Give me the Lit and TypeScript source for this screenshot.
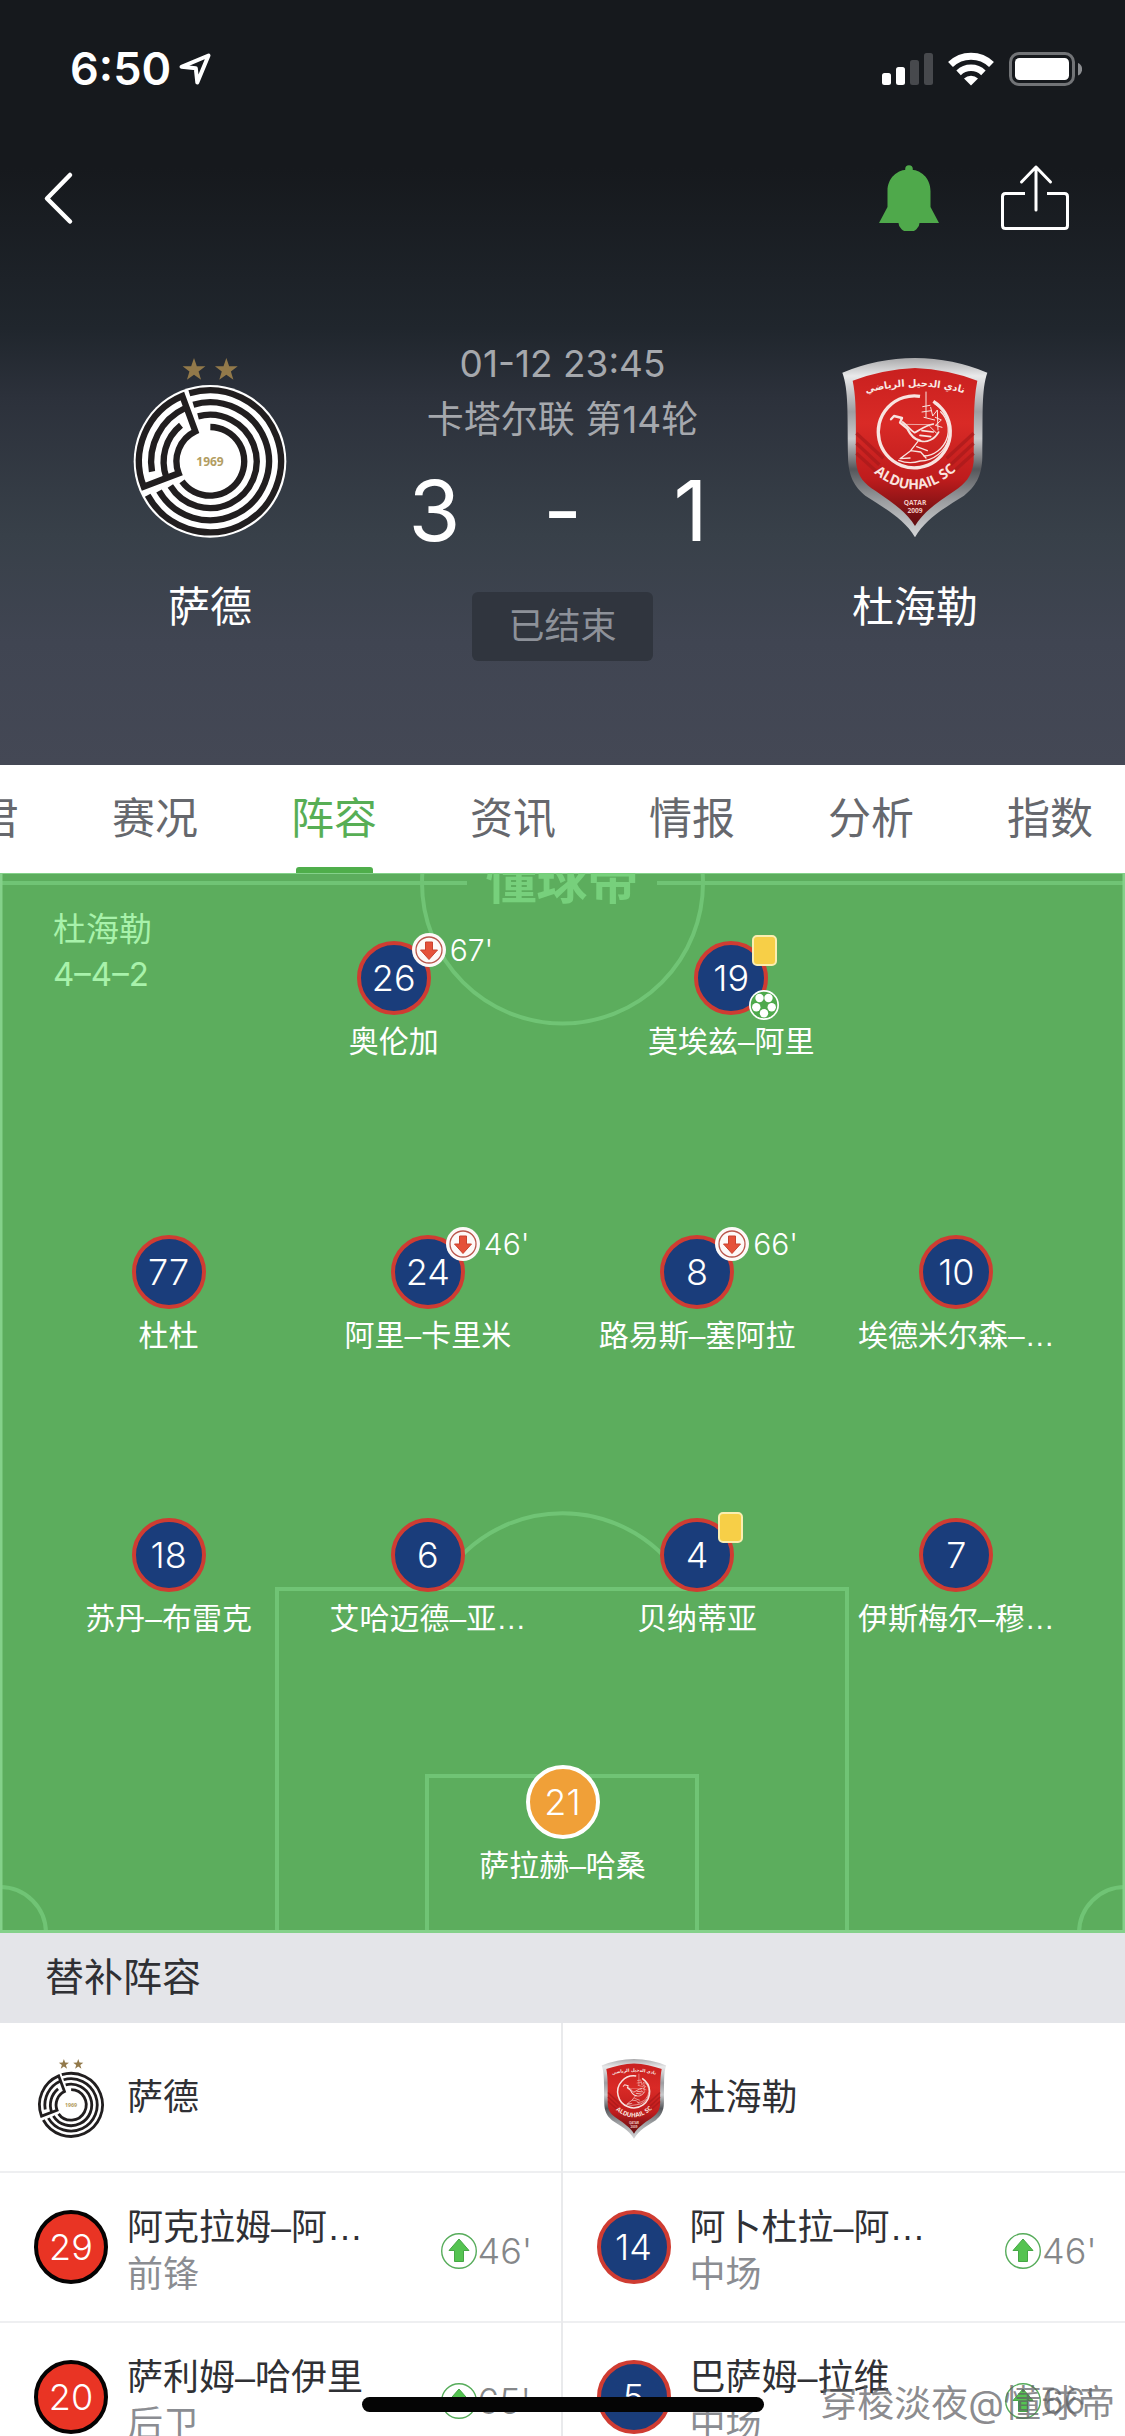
import { LitElement, html, svg, css, nothing } from "lit";
import { customElement, property, state } from "lit/decorators.js";
import { classMap } from "lit/directives/class-map.js";

type Kit = "navy" | "keeper" | "red";

interface Player {
  no: number;
  name: string;
  kit?: Kit;
  off?: string;
  card?: boolean;
  goal?: boolean;
}

interface Substitute {
  no: number;
  name: string;
  role: string;
  on: string;
}

const LINES: Player[][] = [
  [
    { no: 26, name: "奥伦加", off: "67'" },
    { no: 19, name: "莫埃兹–阿里", card: true, goal: true },
  ],
  [
    { no: 77, name: "杜杜" },
    { no: 24, name: "阿里–卡里米", off: "46'" },
    { no: 8, name: "路易斯–塞阿拉", off: "66'" },
    { no: 10, name: "埃德米尔森–…" },
  ],
  [
    { no: 18, name: "苏丹–布雷克" },
    { no: 6, name: "艾哈迈德–亚…" },
    { no: 4, name: "贝纳蒂亚", card: true },
    { no: 7, name: "伊斯梅尔–穆…" },
  ],
  [{ no: 21, name: "萨拉赫–哈桑", kit: "keeper" }],
];

const BENCH: { team: "sadd" | "duhail"; label: string; kit: Kit; players: Substitute[] }[] = [
  {
    team: "sadd",
    label: "萨德",
    kit: "red",
    players: [
      { no: 29, name: "阿克拉姆–阿…", role: "前锋", on: "46'" },
      { no: 20, name: "萨利姆–哈伊里", role: "后卫", on: "65'" },
    ],
  },
  {
    team: "duhail",
    label: "杜海勒",
    kit: "navy",
    players: [
      { no: 14, name: "阿卜杜拉–阿…", role: "中场", on: "46'" },
      { no: 5, name: "巴萨姆–拉维", role: "中场", on: "66'" },
    ],
  },
];

const TABS = ["君", "赛况", "阵容", "资讯", "情报", "分析", "指数"];

const star = (cx: number, cy: number, r: number) => {
  const pts: string[] = [];
  for (let i = 0; i < 10; i++) {
    const a = (Math.PI / 5) * i - Math.PI / 2;
    const d = i % 2 ? r * 0.4 : r;
    pts.push(`${(cx + d * Math.cos(a)).toFixed(1)},${(cy + d * Math.sin(a)).toFixed(1)}`);
  }
  return svg`<polygon points=${pts.join(" ")} fill="#92794a" />`;
};

@customElement("team-crest")
export class TeamCrest extends LitElement {
  @property() team: "sadd" | "duhail" = "sadd";

  static styles = css`
    :host {
      display: block;
      aspect-ratio: 1;
    }
    svg {
      display: block;
      width: 100%;
      height: 100%;
    }
    .latin {
      font-family: "Open Sans", "Liberation Sans", sans-serif;
      font-weight: 700;
    }
    .arabic {
      font-family: "DejaVu Sans", sans-serif;
      font-weight: 700;
    }
  `;

  private sadd() {
    return html`<svg viewBox="62 84 540 540" role="img" aria-label="萨德">
      ${star(284, 120, 36)} ${star(381, 120, 36)}
      <circle cx="332" cy="394" r="229" fill="#fff" />
      <g transform="translate(332 394)" fill="none" stroke="#211e1f" stroke-width="19">
        <path d="M-62 -204A213 213 0 1 1 -187 102" />
        <path d="M-50 -170A177 177 0 1 1 -153 89" />
        <path d="M-36 -135A140 140 0 1 1 -119 74" />
        <path d="M1 -103A103 103 0 1 1 -84 60" />
        <path d="M-83 -196L-44 -90A100 100 0 0 0 -94 36L-199 76A213 213 0 0 1 -83 -196Z" />
        <path d="M-174 31A177 177 0 0 1 -74 -160" />
        <path d="M-131 48A140 140 0 0 1 -87 -108" />
      </g>
      <text class="latin" x="332" y="408" text-anchor="middle" font-size="36" fill="#b29d62">1969</text>
    </svg>`;
  }

  private duhail() {
    return html`<svg viewBox="15 84 540 540" role="img" aria-label="杜海勒">
      <defs>
        <linearGradient id="steel" x1="0" y1="0" x2="0" y2="1">
          <stop offset="0" stop-color="#a9a9ab" />
          <stop offset=".1" stop-color="#e9e9ea" />
          <stop offset=".3" stop-color="#9d9ea2" />
          <stop offset=".45" stop-color="#c9cacc" />
          <stop offset=".62" stop-color="#55575b" />
          <stop offset=".8" stop-color="#9c9ea1" />
          <stop offset="1" stop-color="#d5d6d8" />
        </linearGradient>
        <linearGradient id="cloth" x1="0" y1="0" x2="0" y2="1">
          <stop offset="0" stop-color="#c9201f" />
          <stop offset=".35" stop-color="#d92a26" />
          <stop offset=".7" stop-color="#bf1c1d" />
          <stop offset="1" stop-color="#5f0d10" />
        </linearGradient>
        <path id="top-arc" d="M116 196Q285 142 454 196" />
        <path id="low-arc" d="M140 408Q285 552 430 400" />
      </defs>
      <path
        fill="url(#steel)"
        d="M67 128Q170 85 285 84Q400 85 502 128C484 180 489 250 487 380C486 440 465 470 432 497C375 533 318 565 285 622C252 565 190 533 136 497C104 470 85 440 84 380C82 250 86 180 67 128Z"
      />
      <path
        fill="url(#cloth)"
        d="M98 152Q190 118 285 114Q382 118 472 152C458 220 463 300 461 395C456 440 434 462 404 482C350 518 308 548 285 588C262 548 218 518 166 482C134 462 112 440 108 395C106 300 112 220 98 152Z"
      />
      <g fill="none" stroke="#a81a1b" stroke-width="10" opacity=".7">
        <path d="M109 310L190 385M109 340L178 404M109 370L170 425" />
        <path d="M461 310L380 385M461 340L392 404M461 370L400 425" />
      </g>
      <g fill="none" stroke="#f8e4e0" stroke-linecap="round" stroke-linejoin="round">
        <path stroke-width="10" stroke-linecap="butt" d="M300 199A108 108 0 1 0 340 214" />
        <path stroke-width="4" d="M345 222A92 92 0 0 1 300 393A96 96 0 0 1 236 391" />
        <path stroke-width="4" d="M362 245A78 78 0 0 1 312 378" />
        <path stroke-width="7" d="M213 268L222 258L246 264L240 278L262 296C272 316 284 328 300 332" />
        <path stroke-width="5" d="M248 276C262 286 270 300 284 308C300 300 316 286 340 282" />
        <path stroke-width="5" d="M300 332C320 340 344 328 356 306M300 316L332 320M306 302L340 306" />
        <path stroke-width="4" d="M294 334L272 362L302 366L318 384M290 350L322 362M272 362L240 386L270 384" />
        <path stroke-width="3" d="M318 186V262M308 230L330 226M306 246L334 242M312 262L344 270M332 232L338 258L352 240L354 300M346 262L364 270L346 286L366 292M330 290L350 310" />
        <path stroke-width="2" d="M246 283L340 284" />
      </g>
      <text class="arabic" font-size="29" fill="#fae9e4" text-anchor="middle">
        <textPath href="#top-arc" startOffset="50%">نادي الدحيل الرياضي</textPath>
      </text>
      <text class="latin" font-size="42" fill="#fae3df" text-anchor="middle">
        <textPath href="#low-arc" startOffset="50%">ALDUHAIL SC</textPath>
      </text>
      <g class="latin" fill="#f0c9c5" text-anchor="middle" font-size="20">
        <text x="285" y="525">QATAR</text>
        <text x="285" y="549">2009</text>
      </g>
    </svg>`;
  }

  render() {
    return this.team === "sadd" ? this.sadd() : this.duhail();
  }
}

@customElement("shirt-disc")
export class ShirtDisc extends LitElement {
  @property() kit: Kit = "navy";
  @property({ type: Number }) no = 0;

  static styles = css`
    :host {
      display: block;
    }
    .disc {
      box-sizing: border-box;
      width: 74px;
      height: 74px;
      border: 4px solid #cf3c32;
      border-radius: 50%;
      background: #1a3d7b;
      color: #fff;
      display: flex;
      align-items: center;
      justify-content: center;
      font: 300 36px/40px Inter, "Liberation Sans", sans-serif;
    }
    .keeper {
      border-color: #fff;
      background: #f0a038;
    }
    .red {
      border-color: #050303;
      background: #e93424;
    }
  `;

  render() {
    return html`<div class=${classMap({ disc: true, [this.kit]: true })}>${this.no}</div>`;
  }
}

@customElement("pitch-player")
export class PitchPlayer extends LitElement {
  @property({ attribute: false }) player!: Player;

  static styles = css`
    :host {
      display: flex;
      flex-direction: column;
      align-items: center;
      color: #fff;
    }
    .figure {
      position: relative;
    }
    .off {
      position: absolute;
      left: 55px;
      top: -8px;
      display: flex;
      align-items: center;
      gap: 4px;
      font-weight: 300;
      font-size: 30px;
      line-height: 34px;
    }
    .off svg {
      width: 34px;
      height: 34px;
    }
    .card {
      position: absolute;
      left: 58px;
      top: -6px;
      width: 25px;
      height: 31px;
      box-sizing: border-box;
      border: 2px solid #fbeeb0;
      border-radius: 5px;
      background: #f7cf47;
    }
    .goal {
      position: absolute;
      left: 55px;
      top: 49px;
      width: 30px;
      height: 30px;
    }
    .name {
      margin-top: 8px;
      font-family: "Liberation Sans", "Noto Sans CJK SC", sans-serif;
      font-size: 30px;
      line-height: 38px;
      white-space: nowrap;
    }
  `;

  render() {
    const p = this.player;
    return html`
      <div class="figure">
        <shirt-disc .kit=${p.kit ?? "navy"} .no=${p.no}></shirt-disc>
        ${p.off
          ? html`<div class="off">
              <svg viewBox="0 0 34 34" aria-hidden="true">
                <circle cx="17" cy="17" r="17" fill="#fdf9f8" />
                <circle cx="17" cy="17" r="13" fill="none" stroke="#b9574c" stroke-width="1.3" />
                <path d="M13.5 9h7v8h5L17 26.5 8.500 17h5z" fill="#e5513a" stroke="#c9422f" />
              </svg>
              <span>${p.off}</span>
            </div>`
          : nothing}
        ${p.card ? html`<div class="card"></div>` : nothing}
        ${p.goal
          ? html`<svg class="goal" viewBox="0 0 30 30" aria-hidden="true">
              <circle cx="15" cy="15" r="15" fill="#fff" />
              <circle cx="15" cy="15" r="13.300" fill="#4ea94c" />
              <g fill="#fff">
                <circle cx="10.500" cy="8" r="4.200" />
                <circle cx="19.500" cy="8" r="4.200" />
                <circle cx="7.300" cy="17.300" r="4.200" />
                <circle cx="22.700" cy="17.300" r="4.200" />
                <circle cx="15" cy="23.300" r="4.200" />
              </g>
            </svg>`
          : nothing}
      </div>
      <div class="name">${p.name}</div>
    `;
  }
}

@customElement("app-root")
export class AppRoot extends LitElement {
  @state() private tab = "阵容";

  static styles = css`
    :host {
      display: block;
      font-family: Inter, "Noto Sans CJK SC", sans-serif;
      color: #2f3034;
    }
    * {
      box-sizing: border-box;
    }
    button {
      border: 0;
      padding: 0;
      background: none;
      font: inherit;
      color: inherit;
    }
    svg {
      display: block;
    }
    .screen {
      position: relative;
      height: 100vh;
      overflow: hidden;
      background: #fff;
    }

    .head {
      color: #fff;
      background: linear-gradient(#16191d 0, #16191d 22%, #20262d 43%, #2c313b 52%, #384049 70%, #404552 84%, #444855 100%);
    }
    .status {
      height: 132px;
      padding: 6px 43px 0 70px;
      display: flex;
      align-items: center;
    }
    .clock {
      font-size: 45px;
      font-weight: 600;
      line-height: 54px;
    }
    .locate {
      width: 34px;
      height: 34px;
      margin-left: 7px;
    }
    .signals {
      margin-left: auto;
      display: flex;
      align-items: center;
      gap: 15px;
    }
    .bars {
      width: 51px;
      height: 34px;
    }
    .wifi {
      width: 46px;
      height: 34px;
    }
    .battery {
      width: 73px;
      height: 34px;
    }
    .bar {
      height: 132px;
      padding: 0 54px 0 43px;
      display: flex;
      align-items: center;
    }
    .back svg {
      width: 32px;
      height: 56px;
    }
    .bell {
      margin-left: auto;
    }
    .bell svg {
      width: 60px;
      height: 66px;
    }
    .share {
      margin-left: 60px;
    }
    .share svg {
      width: 72px;
      height: 68px;
    }
    .match {
      display: grid;
      grid-template-columns: 180px 1fr 180px;
      padding: 72px 120px 104px;
    }
    .team {
      padding-top: 22px;
      text-align: center;
    }
    .team-name {
      margin-top: 39px;
      font-size: 42px;
      line-height: 60px;
      white-space: nowrap;
    }
    .mid {
      display: flex;
      flex-direction: column;
      align-items: center;
      color: #a5a8ad;
      font-size: 37px;
      line-height: 56px;
    }
    .score {
      width: 384px;
      margin-top: 13px;
      display: grid;
      grid-template-columns: repeat(3, 1fr);
      text-align: center;
      color: #fff;
      font-size: 84px;
      line-height: 100px;
    }
    .state {
      margin-top: 31px;
      padding: 0 36px;
      border-radius: 6px;
      background: #30353e;
      color: #8d9199;
      font-size: 36px;
      line-height: 69px;
    }

    .tabs {
      height: 108px;
      display: flex;
      gap: 93px;
      margin-left: -24px;
      font-size: 43px;
      color: #66686d;
    }
    .tab {
      flex: none;
      display: flex;
      flex-direction: column;
      align-items: center;
      line-height: 102px;
      padding-top: 2px;
    }
    .tab::after {
      content: "";
      width: 77px;
      height: 6px;
      margin-top: -2px;
      border-radius: 3px 3px 0 0;
    }
    .tab:first-child::after {
      display: none;
    }
    .chosen {
      color: #57ae55;
    }
    .chosen::after {
      background: #4fae4b;
    }

    .pitch {
      position: relative;
      height: 1060px;
      padding-top: 68px;
      background: #5cad5d;
      overflow: hidden;
    }
    .turf {
      position: absolute;
      inset: 0;
      width: 100%;
      height: 100%;
    }
    .turf-mark {
      font-family: "Noto Sans CJK SC", sans-serif;
      font-weight: 700;
    }
    .shape {
      position: absolute;
      left: 53px;
      top: 34px;
      color: #a8f2ab;
      font-size: 33px;
      line-height: 45px;
    }
    .lines {
      position: relative;
      display: grid;
      grid-template-rows: 294px 283px 247px auto;
    }
    .line {
      display: grid;
      align-items: start;
      justify-content: center;
    }
    .of-1 {
      grid-template-columns: 30%;
    }
    .of-2 {
      grid-template-columns: 30% 30%;
    }
    .of-4 {
      padding: 0 44px;
      grid-template-columns: 249fr 269fr 269fr 249fr;
    }

    .section {
      margin: 0;
      padding: 0 45px 2px;
      background: #e4e5e9;
      font-size: 39px;
      font-weight: 400;
      line-height: 88px;
    }
    .bench {
      display: grid;
      grid-template-columns: 1fr 1fr;
    }
    .side:first-child {
      border-right: 2px solid #e9eaec;
    }
    .row {
      height: 150px;
      padding-left: 34px;
      border-bottom: 2px solid #eeeff1;
      display: grid;
      grid-template-columns: 74px 1fr 120px;
      column-gap: 19px;
      align-items: center;
      font-family: "Liberation Sans", "Noto Sans CJK SC", sans-serif;
      font-size: 36px;
      line-height: 47px;
    }
    .row team-crest {
      width: 80px;
      margin-top: 3px;
      justify-self: center;
    }
    .info {
      padding-top: 7px;
      white-space: nowrap;
    }
    .role {
      color: #8b8d92;
    }
    .on {
      padding-top: 8px;
      display: flex;
      align-items: center;
      gap: 1px;
      color: #858789;
      font-family: Inter, sans-serif;
      font-weight: 300;
    }
    .on svg {
      width: 36px;
      height: 36px;
    }

    .credit {
      position: absolute;
      right: 10px;
      bottom: 8px;
      color: rgba(95, 96, 100, 0.72);
      font-size: 37px;
      line-height: 48px;
    }
    .home {
      position: absolute;
      left: 50%;
      bottom: 24px;
      width: 402px;
      height: 15px;
      margin-left: -201px;
      border-radius: 8px;
      background: #050505;
    }
  `;

  private renderStatus() {
    return html`<div class="status">
      <span class="clock">6:50</span>
      <svg class="locate" viewBox="0 0 34 34" aria-hidden="true">
        <path d="M3.500 14.800L30.500 3.500L19.300 30.500L17.800 16.200Z" fill="none" stroke="#fff" stroke-width="4" stroke-linejoin="round" />
      </svg>
      <div class="signals">
        <svg class="bars" viewBox="0 0 51 34" aria-hidden="true">
          <rect x="0" y="21" width="9" height="12" rx="2.500" fill="#fff" />
          <rect x="14" y="15" width="9" height="18" rx="2.500" fill="#fff" />
          <rect x="28" y="8" width="9" height="25" rx="2.500" fill="#47494d" />
          <rect x="42" y="1" width="9" height="32" rx="2.500" fill="#47494d" />
        </svg>
        <svg class="wifi" viewBox="0 0 46 34" aria-hidden="true">
          <g fill="none" stroke="#fff">
            <path d="M2.500 12.500A29.500 29.500 0 0 1 43.500 12.500" stroke-width="7" />
            <path d="M10.600 20.800A18 18 0 0 1 35.400 20.800" stroke-width="6.500" />
          </g>
          <path d="M16 26.500A10.500 10.500 0 0 1 30 26.500L23 33.500Z" fill="#fff" />
        </svg>
        <svg class="battery" viewBox="0 0 73 34" aria-hidden="true">
          <rect x="1.500" y="1.500" width="63" height="31" rx="8.500" fill="none" stroke="#727477" stroke-width="3" />
          <rect x="6" y="6" width="54" height="22" rx="4.500" fill="#fff" />
          <path d="M69 11C74.500 13 74.500 21 69 23.500Z" fill="#8b8d90" />
        </svg>
      </div>
    </div>`;
  }

  private renderBar() {
    return html`<div class="bar">
      <button class="back" aria-label="返回">
        <svg viewBox="0 0 32 56">
          <path d="M27 5L4 28.500L27 51.500" fill="none" stroke="#fff" stroke-width="4.500" stroke-linecap="round" stroke-linejoin="round" />
        </svg>
      </button>
      <button class="bell" aria-label="提醒">
        <svg viewBox="0 0 60 66" fill="#4fa94b">
          <circle cx="30" cy="4" r="3.800" />
          <path d="M8.500 42V26C8.500 13 18 4.500 30 4.500S51.500 13 51.500 26V42L60 58H40.500A10.500 9 0 0 1 19.500 58H0Z" />
        </svg>
      </button>
      <button class="share" aria-label="分享">
        <svg viewBox="0 0 72 68" fill="none" stroke="#fff" stroke-width="3" stroke-linecap="round" stroke-linejoin="round">
          <path d="M26 29.500H6.500Q3.500 29.500 3.500 32.500V61.500Q3.500 64.500 6.500 64.500H65.500Q68.500 64.500 68.500 61.500V32.500Q68.500 29.500 65.500 29.500H48" stroke-linecap="butt" />
          <path d="M37 46V3M22.500 18L37 3L51.500 18" />
        </svg>
      </button>
    </div>`;
  }

  private renderMatch() {
    return html`<div class="match">
      <div class="team">
        <team-crest team="sadd"></team-crest>
        <div class="team-name">萨德</div>
      </div>
      <div class="mid">
        <div>01-12 23:45</div>
        <div>卡塔尔联 第14轮</div>
        <div class="score"><span>3</span><span>-</span><span>1</span></div>
        <div class="state">已结束</div>
      </div>
      <div class="team">
        <team-crest team="duhail"></team-crest>
        <div class="team-name">杜海勒</div>
      </div>
    </div>`;
  }

  private renderPitch() {
    return html`<section class="pitch">
      <svg class="turf" viewBox="0 0 1125 1060" preserveAspectRatio="none" aria-hidden="true">
        <g fill="none" stroke="#70c475" stroke-width="4">
          <path d="M0 10H467M657 10H1125" />
          <circle cx="562.500" cy="10" r="140.500" />
          <path d="M438 715A141 141 0 0 1 687 715" />
          <path d="M277 1060V716H847V1060" />
          <path d="M427 1060V903H697V1060" />
          <path d="M0 1014A46 46 0 0 1 46 1060M1125 1014A46 46 0 0 0 1079 1060" />
        </g>
        <g fill="none" stroke="#84d18a">
          <path d="M1 0V1060M1124 0V1060" stroke-width="3" />
          <path d="M0 1058.500H1125" stroke-width="3" />
          <path d="M0 0H1125" stroke-width="2" />
        </g>
        <text class="turf-mark" x="562" y="26" text-anchor="middle" font-size="51" fill="#77d07c">懂球帝</text>
      </svg>
      <div class="shape">
        <div>杜海勒</div>
        <div>4–4–2</div>
      </div>
      <div class="lines">
        ${LINES.map(
          (line) => html`<div class=${`line of-${line.length}`}>
            ${line.map((p) => html`<pitch-player .player=${p}></pitch-player>`)}
          </div>`
        )}
      </div>
    </section>`;
  }

  private renderBench() {
    return html`<h2 class="section">替补阵容</h2>
      <div class="bench">
        ${BENCH.map(
          (side) => html`<div class="side">
            <div class="row">
              <team-crest team=${side.team}></team-crest>
              <div>${side.label}</div>
            </div>
            ${side.players.map(
              (p) => html`<div class="row">
                <shirt-disc .kit=${side.kit} .no=${p.no}></shirt-disc>
                <div class="info">
                  <div>${p.name}</div>
                  <div class="role">${p.role}</div>
                </div>
                <div class="on">
                  <svg viewBox="0 0 36 36" aria-hidden="true">
                    <circle cx="18" cy="18" r="17.300" fill="#fff" stroke="#57ac5b" stroke-width="1.400" />
                    <path d="M18 6L28 17.500H22.500V28.500H13.500V17.500H8Z" fill="#55c351" stroke="#45a745" stroke-linejoin="round" />
                  </svg>
                  <span>${p.on}</span>
                </div>
              </div>`
            )}
          </div>`
        )}
      </div>`;
  }

  render() {
    return html`<main class="screen">
      <header class="head">${this.renderStatus()} ${this.renderBar()} ${this.renderMatch()}</header>
      <nav class="tabs">
        ${TABS.map(
          (t) => html`<button
            class=${classMap({ tab: true, chosen: t === this.tab })}
            aria-pressed=${t === this.tab}
            @click=${() => (this.tab = t)}
          >
            ${t}
          </button>`
        )}
      </nav>
      ${this.renderPitch()} ${this.renderBench()}
      <div class="home"></div>
      <div class="credit">穿梭淡夜@懂球帝</div>
    </main>`;
  }
}
